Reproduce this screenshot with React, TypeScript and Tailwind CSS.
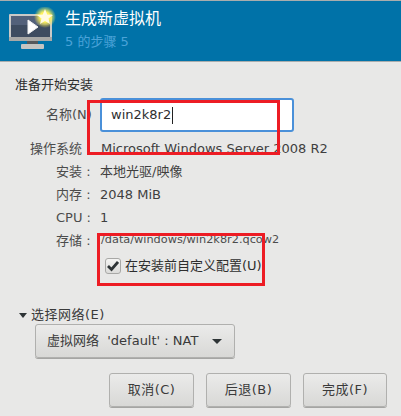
const font = "font-['DejaVu_Sans','Noto_Sans_CJK_SC',sans-serif]";

function InfoRow({ label, value, small }: { label: string; value: string; small?: boolean }) {
    return (
        <div className="flex h-[23px] items-center">
            <div className="w-[100px] pl-[56px] whitespace-nowrap text-[#4c4c4c]">{label}</div>
            <div className={small ? "ml-[1px] text-[11.3px] text-[#4c4c4c] whitespace-nowrap" : "text-[#3f3f3f] whitespace-nowrap"}>{value}</div>
        </div>
    );
}

function GrayButton({ children, className }: { children: React.ReactNode; className: string }) {
    return (
        <button
            type="button"
            className={"flex h-[34px] items-center rounded-[3px] border border-[#b0b0ae] bg-gradient-to-b from-[#ebebea] to-[#d8d8d6] text-[#3a3a3a] shadow-[0_1px_0_#a5a5a3] " + className}
        >
            {children}
        </button>
    );
}

function MonitorIcon() {
    return (
        <svg width="56" height="50" viewBox="0 0 56 50" className="shrink-0">
            <defs>
                <radialGradient id="glow">
                    <stop offset="0.45" stopColor="#fff25a" />
                    <stop offset="1" stopColor="#fff25a" stopOpacity="0" />
                </radialGradient>
            </defs>
            <rect x="1" y="7" width="43" height="27" rx="1" fill="#c9c9c7" />
            <rect x="3" y="9" width="39" height="21" fill="#3e4c60" />
            <rect x="3" y="9" width="39" height="9" fill="#53617a" />
            <rect x="1" y="30" width="43" height="4" fill="#a8a8a6" />
            <path d="M20 13 L20 27 L30 20 Z" fill="#fff" stroke="#f2f2f2" strokeWidth="1" />
            <rect x="19" y="34" width="11" height="3" fill="#55585c" />
            <rect x="13" y="37" width="23" height="5" rx="1" fill="#c4c4c2" />
            <circle cx="37" cy="10" r="11" fill="url(#glow)" />
            <path d="M37 2 L39.2 7.6 L45 8 L40.5 11.6 L42 17 L37 14 L32 17 L33.5 11.6 L29 8 L34.8 7.6 Z" fill="#fffbe0" />
        </svg>
    );
}

export default function App() {
    return (
        <div className={"relative h-[416px] w-[401px] overflow-hidden bg-[#e8e8e7] text-[13px] " + font}>
            <div className="flex h-[62px] border-y border-[#a9adad] bg-[#0072a8] pl-[8px] pt-[6px]">
                <MonitorIcon />
                <div className="ml-[1px] mt-[3px]">
                    <div className="text-[16px] leading-[17px] text-white">生成新虚拟机</div>
                    <div className="mt-[8px] text-[13px] leading-[14px] text-[#4ba3d8]">5 的步骤 5</div>
                </div>
            </div>

            <div className="pl-[15px] pt-[15px] leading-[16px] text-[#2e2e2e]">准备开始安装</div>

            <div className="mt-[5px] flex h-[34px] items-center">
                <div className="w-[100px] pl-[46px] whitespace-nowrap text-[#4c4c4c]">名称(N)</div>
                <div className="flex h-[34px] w-[194px] items-center rounded-[3px] border-2 border-[#4a90d9] bg-white pl-[9px] text-[#2e2e2e]">
                    win2k8r2
                    <span className="ml-[1px] h-[17px] w-px bg-[#222]" />
                </div>
            </div>

            <div className="mt-[5px]">
                <div className="flex h-[23px] items-center">
                    <div className="w-[101px] pl-[30px] whitespace-nowrap text-[#4c4c4c]">操作系统</div>
                    <div className="text-[#3f3f3f] whitespace-nowrap">Microsoft Windows Server 2008 R2</div>
                </div>
                <InfoRow label="安装 :" value="本地光驱/映像" />
                <InfoRow label="内存 :" value="2048 MiB" />
                <InfoRow label="CPU :" value="1" />
                <InfoRow label="存储 :" value="/data/windows/win2k8r2.qcow2" small />
            </div>

            <div className="ml-[105px] mt-[3px] flex h-[22px] items-center text-[#2e2e2e]">
                <span className="flex h-[16px] w-[16px] items-center justify-center rounded-[3px] border border-[#a8a8a6] bg-gradient-to-b from-[#f4f4f3] to-[#dcdcda]">
                    <svg width="12" height="12" viewBox="0 0 12 12">
                        <path d="M1 6 L4.5 9.5 L11 2" fill="none" stroke="#2e3436" strokeWidth="2.8" />
                    </svg>
                </span>
                <span className="ml-[4px] whitespace-nowrap">在安装前自定义配置(U)</span>
            </div>

            <div className="ml-[19px] mt-[30px] flex h-[16px] items-center text-[#3a3a3a]">
                <span className="h-0 w-0 border-x-[4px] border-t-[5px] border-x-transparent border-t-[#2e3436]" />
                <span className="ml-[4px] whitespace-nowrap tracking-[0.5px]">选择网络(E)</span>
            </div>

            <GrayButton className="ml-[35px] mt-[1px] w-[200px] pl-[11px]">
                <span className="whitespace-nowrap">虚拟网络 &nbsp;'default' : NAT</span>
                <span className="ml-auto mr-[12px] h-0 w-0 border-x-[5px] border-t-[5px] border-x-transparent border-t-[#2e3436]" />
            </GrayButton>

            <div className="mt-[15px] flex justify-end gap-[12px] pr-[14px]">
                <GrayButton className="w-[85px] justify-center tracking-[0.5px]">取消(C)</GrayButton>
                <GrayButton className="w-[85px] justify-center tracking-[0.5px]">后退(B)</GrayButton>
                <GrayButton className="w-[84px] justify-center tracking-[0.5px]">完成(F)</GrayButton>
            </div>

            <div className="pointer-events-none absolute left-[87px] top-[100px] h-[55px] w-[193px] border-[3px] border-[#ed1c24]" />
            <div className="pointer-events-none absolute left-[97px] top-[233px] h-[53px] w-[168px] border-[3px] border-[#ed1c24]" />
        </div>
    );
}
